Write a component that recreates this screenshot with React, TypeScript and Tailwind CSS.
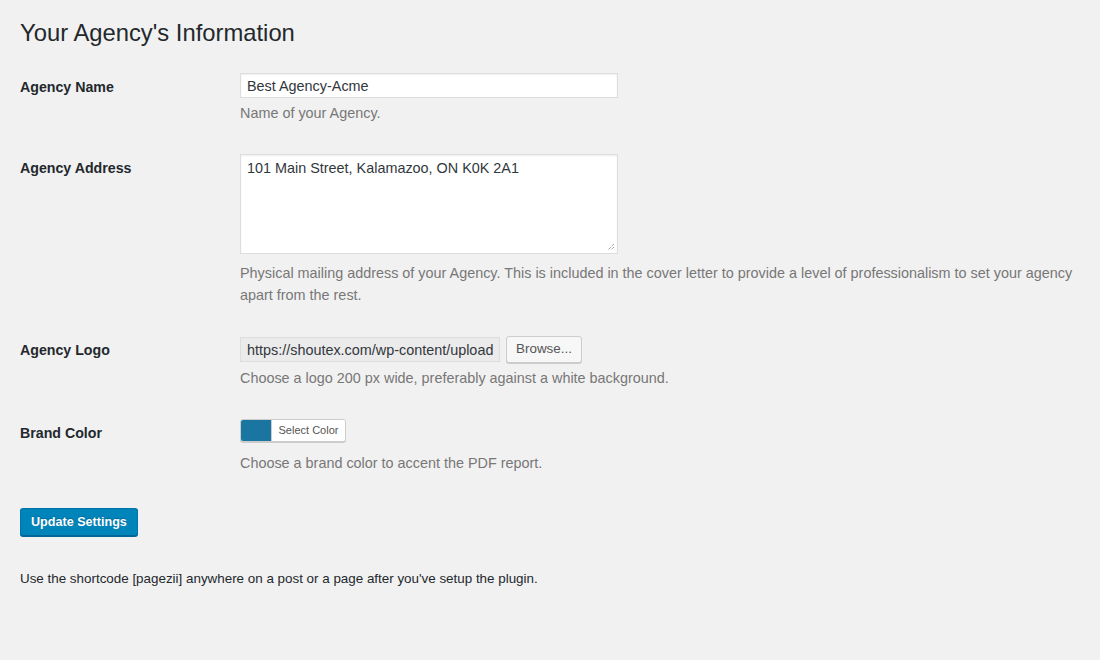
import React from "react";

const font = { fontFamily: '"Liberation Sans", Arial, Helvetica, sans-serif' };

function Row({ label, children }: { label: string; children: React.ReactNode }) {
  return (
    <div className="flex">
      <div className="w-[220px] shrink-0 pt-[20px] pb-[20px] pr-[10px] text-[14.2px] font-bold leading-[18px] text-[#23282d]">
        {label}
      </div>
      <div className="flex-1 pt-[15px] pb-[15px]">{children}</div>
    </div>
  );
}

function Desc({ children }: { children: React.ReactNode }) {
  return <div className="text-[14.4px] leading-[22px] text-[#777777]">{children}</div>;
}

export default function App() {
  return (
    <div className="min-h-[660px] w-full bg-[#f1f1f1] pl-[20px] pr-[20px]" style={font}>
      <h1 className="pt-[18px] text-[23.8px] font-normal leading-[29px] text-[#23282d]">Your Agency's Information</h1>
      <div className="mt-[11px]">
        <Row label="Agency Name">
          <input
            readOnly
            value="Best Agency-Acme"
            className="block h-[25px] w-[378px] border border-[#dddddd] bg-white px-[6px] text-[14.4px] text-[#32373c] shadow-[inset_0_1px_2px_rgba(0,0,0,0.07)] outline-none"
            style={font}
          />
          <div className="mt-[4px]">
            <Desc>Name of your Agency.</Desc>
          </div>
        </Row>
        <Row label="Agency Address">
          <div className="relative h-[100px] w-[378px] border border-[#dddddd] bg-white px-[6px] pt-[3px] text-[14.4px] leading-[20px] text-[#32373c] shadow-[inset_0_1px_2px_rgba(0,0,0,0.07)]">
            101 Main Street, Kalamazoo, ON K0K 2A1
            <svg className="absolute bottom-[2px] right-[2px]" width="9" height="9" viewBox="0 0 9 9">
              <path d="M8 2 L2 8 M8 5 L5 8" stroke="#777" strokeWidth="1" strokeDasharray="1 1" fill="none" />
            </svg>
          </div>
          <div className="mt-[8px]">
            <Desc>
              Physical mailing address of your Agency. This is included in the cover letter to provide a level of professionalism to set your agency apart from the rest.
            </Desc>
          </div>
        </Row>
        <Row label="Agency Logo">
          <div className="flex items-center gap-[6px]">
            <input
              readOnly
              value="https://shoutex.com/wp-content/uploads/2017/logo.png"
              className="block h-[25px] w-[260px] border border-[#dddddd] bg-[#ebebeb] px-[6px] text-[14.4px] text-[#32373c] outline-none"
              style={font}
            />
            <div className="flex h-[27px] w-[76px] items-center justify-center rounded-[3px] border border-[#cccccc] bg-[#f7f7f7] text-[13.4px] text-[#555555] shadow-[0_1px_0_#cccccc]">
              Browse...
            </div>
          </div>
          <div className="mt-[4px]">
            <Desc>Choose a logo 200 px wide, preferably against a white background.</Desc>
          </div>
        </Row>
        <Row label="Brand Color">
          <div className="flex h-[23px] w-[106px] overflow-hidden rounded-[3px] border border-[#cccccc] bg-[#f7f7f7] shadow-[0_1px_0_#cccccc]">
            <div className="w-[30px] bg-[#1a76a0]" />
            <div className="flex flex-1 items-center justify-center border-l border-[#cccccc] bg-white text-[11px] text-[#555555]">
              Select Color
            </div>
          </div>
          <div className="mt-[10px]">
            <Desc>Choose a brand color to accent the PDF report.</Desc>
          </div>
        </Row>
      </div>
      <div className="mt-[19px]">
        <div className="inline-flex h-[28px] items-center rounded-[3px] border border-[#0073aa] border-b-[#006799] bg-[#0085ba] px-[10px] text-[12.6px] font-bold text-white shadow-[0_1px_0_#006799] [text-shadow:0_-1px_1px_#006799]">
          Update Settings
        </div>
      </div>
      <p className="mt-[34px] text-[13.4px] leading-[18px] text-[#23282d]">
        Use the shortcode [pagezii] anywhere on a post or a page after you've setup the plugin.
      </p>
    </div>
  );
}
